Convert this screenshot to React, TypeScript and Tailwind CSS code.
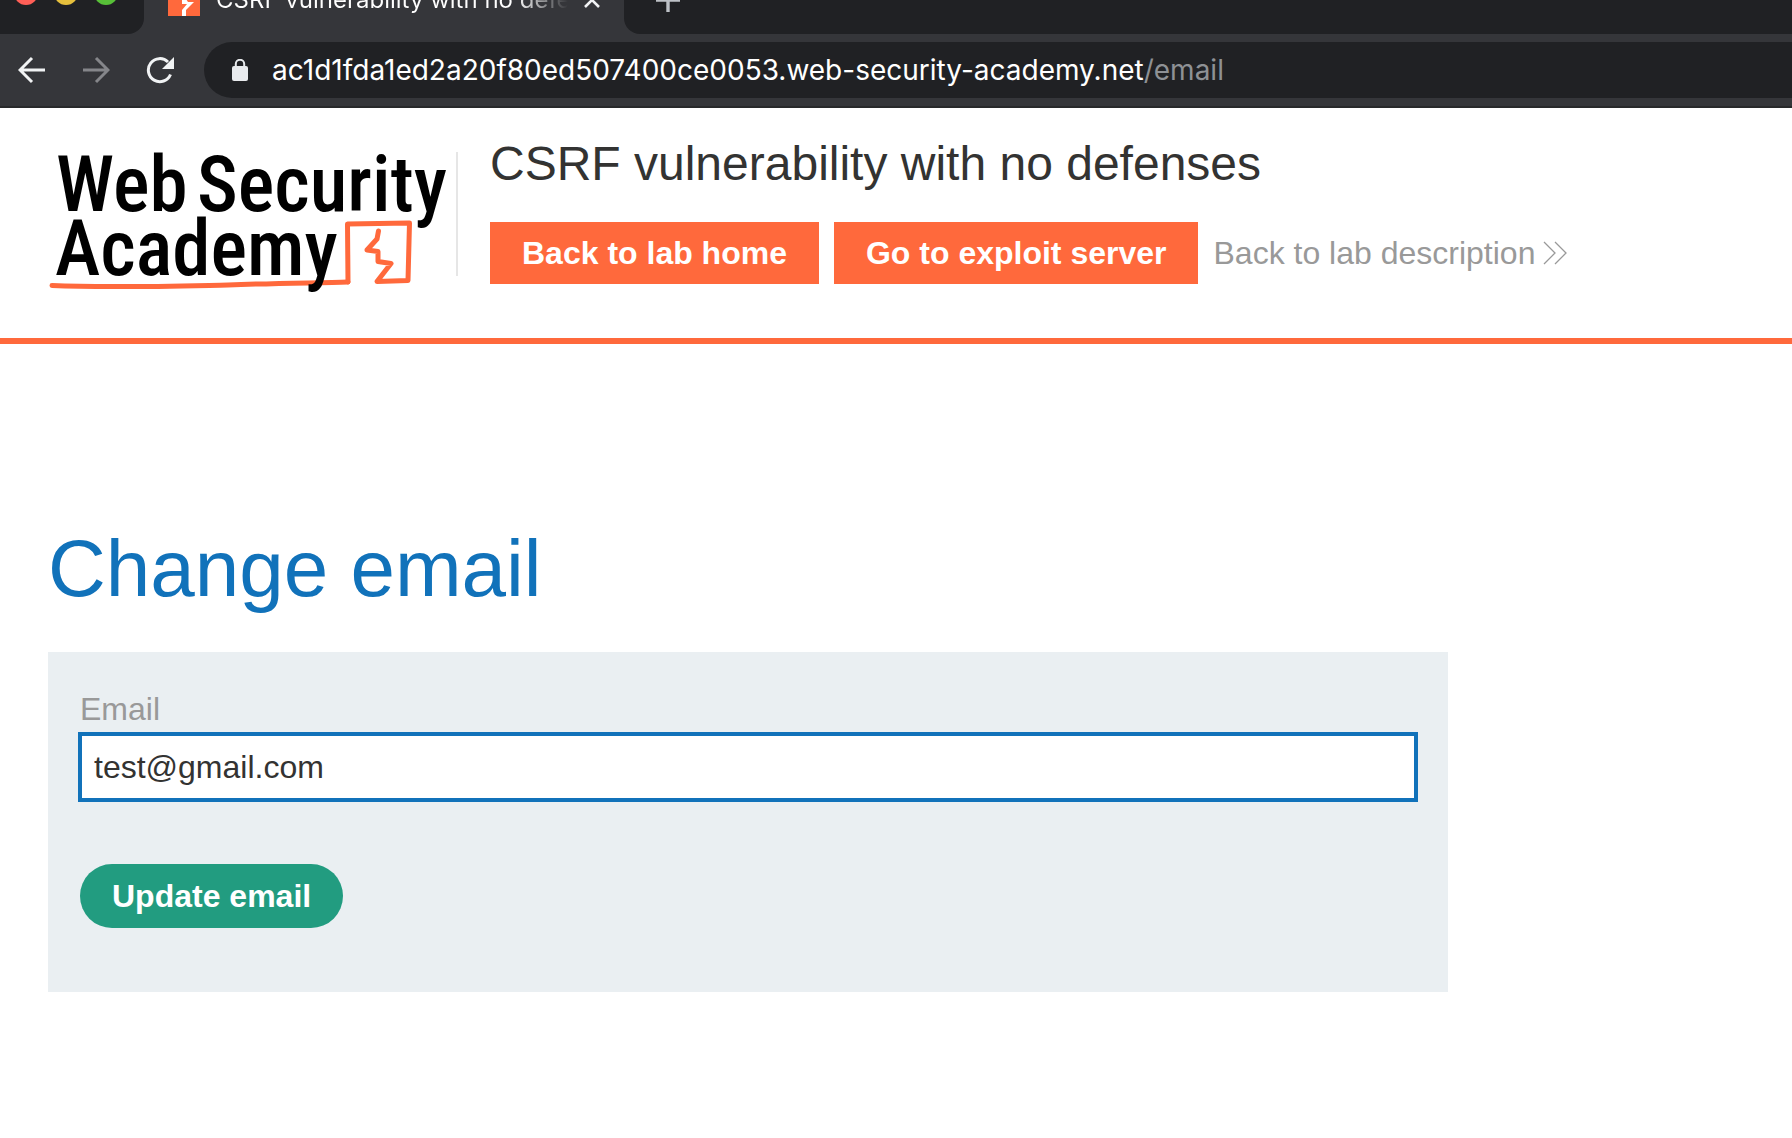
import React from "react";

function TabStrip() {
  return (
    <div className="flex h-[34px] overflow-hidden bg-[#35363a]">
      <div className="flex w-36 shrink-0 gap-4 rounded-br-2xl bg-[#202124] pl-[14px]">
        {["bg-[#ff5f57]", "bg-[#e6c03d]", "bg-[#57c038]"].map((c) => (
          <span key={c} className={`-mt-[19px] size-6 shrink-0 rounded-full ${c}`} />
        ))}
      </div>
      <div className="-mt-4 flex h-8 w-[480px] shrink-0 items-center pl-6 pr-6">
        <svg viewBox="0 0 32 32" className="size-8 shrink-0" aria-hidden="true">
          <path fill="#ff693c" d="M0 0h32v32H0z" />
          <path fill="#fff" d="M14 0h4v15l2 3h6l-8 8v6h-4v-6l5-6h-5z" />
        </svg>
        <span className="ml-4 w-[352px] overflow-hidden whitespace-nowrap bg-gradient-to-r from-white from-85% to-transparent bg-clip-text font-['Inter'] text-[24px] leading-8 text-transparent">
          CSRF vulnerability with no defenses
        </span>
        <button aria-label="Close tab" className="ml-auto">
          <svg viewBox="0 0 16 16" className="size-4" stroke="#f1f3f4" strokeWidth="2.6">
            <path d="M1 1l14 14M15 1L1 15" />
          </svg>
        </button>
      </div>
      <div className="flex-1 rounded-bl-2xl bg-[#202124] pl-8">
        <button aria-label="New tab" className="-mt-3 block">
          <svg viewBox="0 0 24 24" className="size-6" stroke="#bdc1c6" strokeWidth="3.4">
            <path d="M12 0v24M0 12h24" />
          </svg>
        </button>
      </div>
    </div>
  );
}

function Toolbar() {
  return (
    <div className="flex h-[74px] items-center border-b-2 border-[#28292b] bg-[#35363a] pl-[18px] font-['Inter']">
      <button aria-label="Back">
        <svg viewBox="0 0 28 28" className="size-7" fill="none" stroke="#f1f3f4" strokeWidth="3">
          <path d="M27 14H3M14 2L2 14l12 12" />
        </svg>
      </button>
      <button aria-label="Forward" className="ml-9">
        <svg viewBox="0 0 28 28" className="size-7" fill="none" stroke="#85868a" strokeWidth="3">
          <path d="M1 14h24M14 2l12 12-12 12" />
        </svg>
      </button>
      <button aria-label="Reload" className="ml-9">
        <svg viewBox="0 0 28 28" className="size-7" fill="none" stroke="#f1f3f4" strokeWidth="3">
          <path d="M24.500 18.500A11.500 11.500 0 1 1 22 6" />
          <path d="M28 1v12H16z" fill="#f1f3f4" stroke="none" />
        </svg>
      </button>
      <div className="ml-[30px] flex h-14 flex-1 items-center rounded-l-full bg-[#202124] pl-7">
        <svg viewBox="0 0 16 22" className="h-[22px] w-4" aria-hidden="true">
          <rect y="7" width="16" height="15" rx="2" fill="#e8eaed" />
          <path d="M3.800 8V5a4.200 4.200 0 0 1 8.400 0v3" fill="none" stroke="#e8eaed" strokeWidth="2" />
        </svg>
        <span className="ml-6 whitespace-nowrap text-[28px] leading-8 text-white">
          ac1d1fda1ed2a20f80ed507400ce0053.web-security-academy.net
          <span className="text-[#8e9195]">/email</span>
        </span>
      </div>
    </div>
  );
}

function Logo() {
  return (
    <a href="#" aria-label="Web Security Academy" className="block w-[408px] shrink-0">
      <svg viewBox="0 0 408 152" className="h-[152px] w-[408px]">
        <g fill="none" stroke="#ff693c" strokeWidth="5" strokeLinejoin="round" strokeLinecap="round">
          <path d="M300 136L299.500 78L361.500 77L360 134.500L329 135.500L343 117.500L330 115.500V105.500L319 104L329 93L330.500 85" />
          <path d="M4 139.500C60 142 130 140 180 139C230 137 270 137 300 136" />
        </g>
        <g className="font-['Roboto_Condensed'] font-medium" fontSize="77" fill="#000">
          <text x="8" y="65">Web</text>
          <text x="149" y="65">Security</text>
          <text x="7" y="129">Academy</text>
        </g>
      </svg>
    </a>
  );
}

export default function App() {
  return (
    <div className="min-h-screen bg-white font-['Liberation_Sans',sans-serif] text-[32px] leading-9 text-[#333332]">
      <TabStrip />
      <Toolbar />
      <header className="flex items-start border-b-[6px] border-[#ff693c] pb-10 pl-12">
        <div className="pt-[38px]">
          <Logo />
        </div>
        <div className="mt-11 h-[124px] w-[2px] shrink-0 bg-[#e6e6e6]" />
        <div className="ml-8 pt-7">
          <h1 className="text-[48px] leading-[56px]">CSRF vulnerability with no defenses</h1>
          <div className="mt-[30px] flex items-center gap-[15px] whitespace-nowrap">
            <a href="#" className="bg-[#ff693c] px-8 py-[13px] font-bold text-white">Back to lab home</a>
            <a href="#" className="bg-[#ff693c] px-8 py-[13px] font-bold text-white">Go to exploit server</a>
            <a href="#" className="flex items-center gap-2 text-[#999]">
              Back to lab description
              <svg viewBox="0 0 24 24" className="size-6" fill="none" stroke="#999" strokeWidth="1.300">
                <path d="M1 1l11 11L1 23M12 1l11 11-11 11" />
              </svg>
            </a>
          </div>
        </div>
      </header>
      <main className="px-12 pt-[177px]">
        <h2 className="text-[80px] leading-[96px] text-[#1172ba]">Change email</h2>
        <form className="mt-[35px] max-w-[1400px] bg-[#eaeff2] px-[30px] pb-16 pt-[39px]" onSubmit={(e) => e.preventDefault()}>
          <label htmlFor="email" className="block px-[2px] text-[#999]">Email</label>
          <input
            id="email"
            type="email"
            defaultValue="test@gmail.com"
            className="mt-[5px] block h-[70px] w-full border-4 border-[#1172ba] bg-white px-3 outline-none"
          />
          <button className="ml-[2px] mt-[62px] block h-16 rounded-full bg-[#229c80] px-8 font-bold text-white">Update email</button>
        </form>
      </main>
    </div>
  );
}
